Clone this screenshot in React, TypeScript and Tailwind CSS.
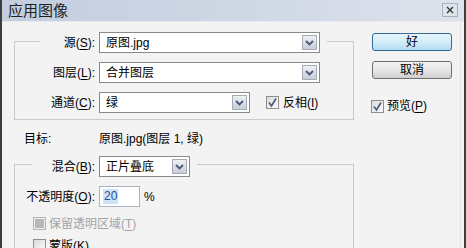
import React from "react";

const FONT = { fontFamily: '"Liberation Sans", "Noto Sans CJK SC", sans-serif' };

function U({ c }: { c: string }) {
  return <span className="underline underline-offset-2">{c}</span>;
}

function Arrow() {
  return (
    <div className="w-[15px] h-[15px] m-[2px] shrink-0 border border-[#a6abb8] bg-gradient-to-b from-[#eef0f4] to-[#c9cdd8] flex items-center justify-center">
      <svg width="9" height="6" viewBox="0 0 9 6">
        <path d="M1 1 L4.5 4.5 L8 1" fill="none" stroke="#4b5775" strokeWidth="1.8" />
      </svg>
    </div>
  );
}

function Check({ checked, disabled }: { checked?: boolean; disabled?: boolean }) {
  if (disabled) {
    return (
      <div className="w-[13px] h-[13px] shrink-0 border border-[#b4b4b4] bg-[#f0f0f0] flex items-center justify-center">
        <div className="w-[9px] h-[9px] bg-[#b8b8b8]" />
      </div>
    );
  }
  return (
    <div className="w-[13px] h-[13px] shrink-0 border border-[#8f8f8f] bg-gradient-to-br from-[#dcdcdc] to-[#fbfbfb] flex items-center justify-center">
      {checked && (
        <svg width="11" height="11" viewBox="0 0 11 11">
          <path d="M2 5.5 L4.5 9 L9 1.5" fill="none" stroke="#4a5f85" strokeWidth="1.7" />
        </svg>
      )}
    </div>
  );
}

export default function App() {
  return (
    <div
      className="w-[466px] h-[248px] overflow-hidden bg-[#f3f3f3] border-l-2 border-r-2 border-[#3d3d3d] flex flex-col text-[12px] text-black"
      style={FONT}
    >
      {/* title bar */}
      <div className="h-[22px] shrink-0 flex items-center justify-between bg-gradient-to-r from-[#c3cdde] via-[#cfd7e5] to-[#dde3ed] border-b border-[#e6e9ef]">
        <span className="pl-[6px] text-[15px] leading-none text-[#1e1e1e]">应用图像</span>
        <div className="w-[16px] h-[14px] mr-[6px] mt-[-2px] border border-[#a9b1c0] bg-[#dfe4ec] flex items-center justify-center">
          <svg width="8" height="8" viewBox="0 0 8 8">
            <path d="M1 1 L7 7 M7 1 L1 7" stroke="#333" strokeWidth="1.4" />
          </svg>
        </div>
      </div>

      {/* body */}
      <div className="flex-1 flex border-r border-[#e4e4e4] mr-[3px]">
        {/* left column */}
        <div className="w-[352px] pl-[12px] flex flex-col">
          {/* group 1 */}
          <div className="mt-[19px] w-[340px] h-[79px] border border-[#c9c9c9] flex flex-col">
            <div className="-mt-[10px] ml-[25px] w-[287px] pr-[7px] bg-[#f3f3f3] flex flex-col gap-[9px]">
              <div className="flex items-center h-[21px]">
                <div className="w-[55px] text-right">
                  源(<U c="S" />):
                </div>
                <div className="ml-[4px] w-[221px] h-[21px] border border-[#8a8a8a] bg-white flex items-center">
                  <span className="flex-1 pl-[6px]">原图.jpg</span>
                  <Arrow />
                </div>
              </div>
              <div className="flex items-center h-[21px]">
                <div className="w-[55px] text-right">
                  图层(<U c="L" />):
                </div>
                <div className="ml-[4px] w-[221px] h-[21px] border border-[#8a8a8a] bg-white flex items-center">
                  <span className="flex-1 pl-[6px]">合并图层</span>
                  <Arrow />
                </div>
              </div>
              <div className="flex items-center h-[21px]">
                <div className="w-[55px] text-right">
                  通道(<U c="C" />):
                </div>
                <div className="ml-[4px] w-[151px] h-[21px] border border-[#8a8a8a] bg-white flex items-center">
                  <span className="flex-1 pl-[6px]">绿</span>
                  <Arrow />
                </div>
                <div className="ml-[16px] flex items-center gap-[4px]">
                  <Check checked />
                  <span>
                    反相(<U c="I" />)
                  </span>
                </div>
              </div>
            </div>
          </div>

          {/* target */}
          <div className="mt-[11px] h-[16px] flex items-center pl-[10px]">
            <span className="w-[75px]">目标:</span>
            <span>原图.jpg(图层 1, 绿)</span>
          </div>

          {/* group 2 */}
          <div className="mt-[17px] w-[340px] h-[120px] border border-[#c9c9c9] flex flex-col">
            <div className="-mt-[9px] ml-[17px] w-[165px] pr-[7px] bg-[#f3f3f3] flex items-center h-[21px]">
              <div className="w-[63px] text-right">
                混合(<U c="B" />):
              </div>
              <div className="ml-[4px] w-[91px] h-[21px] border border-[#8a8a8a] bg-white flex items-center">
                <span className="flex-1 pl-[6px]">正片叠底</span>
                <Arrow />
              </div>
            </div>
            <div className="mt-[9px] flex items-center h-[21px]">
              <div className="w-[80px] text-right">
                不透明度(<U c="O" />):
              </div>
              <div className="ml-[4px] w-[41px] h-[21px] border border-[#a9b3c2] bg-white flex items-center pl-[3px]">
                <span className="bg-[#cfe3f6] text-[#1f4f8f] px-[1px] leading-[15px]">20</span>
              </div>
              <span className="ml-[4px]">%</span>
            </div>
            <div className="mt-[10px] ml-[18px] flex items-center gap-[3px] h-[13px]">
              <Check disabled />
              <span className="text-[#a3a3a3]">
                保留透明区域(<U c="T" />)
              </span>
            </div>
            <div className="mt-[9px] ml-[18px] flex items-center gap-[3px] h-[13px]">
              <Check />
              <span>
                蒙版(<U c="K" />)
              </span>
            </div>
          </div>
        </div>

        {/* right column */}
        <div className="ml-[18px] pt-[11px] flex flex-col">
          <button className="w-[80px] h-[18px] rounded-[3px] border border-[#2f6b93] bg-gradient-to-b from-[#e9f5fc] via-[#d3ecf9] to-[#b3dcf3] flex items-center justify-center leading-none">
            好
          </button>
          <button className="mt-[10px] w-[80px] h-[18px] rounded-[3px] border border-[#6f6f6f] bg-gradient-to-b from-[#f3f3f3] via-[#e6e6e6] to-[#cfcfcf] flex items-center justify-center leading-none">
            取消
          </button>
          <div className="mt-[18px] -ml-[1px] flex items-center gap-[3px]">
            <Check checked />
            <span>
              预览(<U c="P" />)
            </span>
          </div>
        </div>
      </div>
    </div>
  );
}
